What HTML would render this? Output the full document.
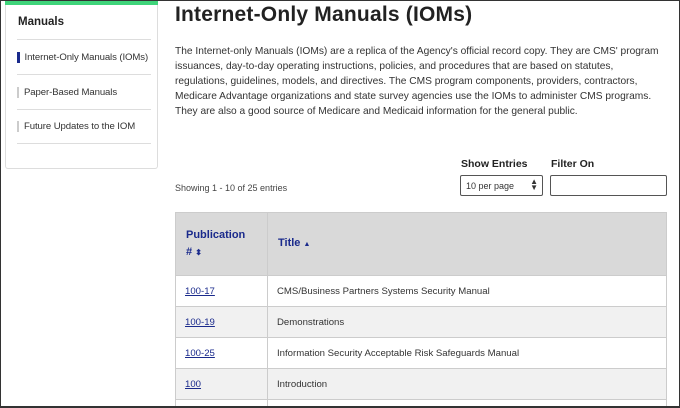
<!DOCTYPE html>
<html><head><style>
*{box-sizing:border-box;margin:0;padding:0}
html,body{width:680px;height:408px;overflow:hidden}
body{background:#fff;font-family:"Liberation Sans",sans-serif;color:#222;position:relative}
.frame{position:absolute;left:0;top:0;width:680px;height:408px;border:1px solid #333;border-bottom-width:2px;pointer-events:none;z-index:9}
.side{position:absolute;left:5px;top:0;width:153px;height:169px;border:1px solid #ddd;border-top:none;border-radius:0 0 3px 3px}
.side .bar{height:5px;background:#3fd47a;margin:0 -1px}
.side h3{font-size:11.5px;font-weight:bold;margin:11px 0 0 12px;color:#222}
.side ul{list-style:none;margin:11px 6px 0 11px}
.side li{border-top:1px solid #ddd;height:35px;display:flex;align-items:center;font-size:9.6px;color:#333;white-space:nowrap;letter-spacing:-.1px}
.side li:last-child{border-bottom:1px solid #ddd}
.side li span{display:inline-block;width:2px;height:11px;background:#ccc;margin-right:5px;flex:none}
.side li.act span{background:#1a2a8c;width:2.5px}
h1{position:absolute;left:175px;top:3px;font-size:21px;font-weight:bold;color:#222;letter-spacing:.2px}
p.d{position:absolute;left:175px;top:44px;font-size:10.2px;line-height:15px;color:#333;white-space:nowrap}
.lbl{position:absolute;top:158px;font-size:10.5px;font-weight:bold;color:#222}
.sel{position:absolute;left:460px;top:175px;width:83px;height:21px;border:1px solid #555;border-radius:2px;font-size:9px;padding:5px 5px;color:#333}
.sel b{position:absolute;right:4px;top:3px;font-size:8px;line-height:6px}
.inp{position:absolute;left:550px;top:175px;width:117px;height:21px;border:1px solid #555;border-radius:2px}
.show{position:absolute;left:175px;top:183px;font-size:9px;color:#444}
table{position:absolute;left:175px;top:212px;width:492px;border-collapse:collapse;font-size:9.6px}
td,th{border:1px solid #ccc;text-align:left;color:#333;font-weight:normal}
th{background:#d9d9d9;height:63px;color:#1a2a8c;font-weight:bold;font-size:11px;padding-left:10px;line-height:17px}
td{height:31px;padding-left:9px}
td:first-child{width:92px}
td a{color:#1a2a8c;text-decoration:underline}
tr.g td{background:#f1f1f1}
</style></head><body>
<div class="frame"></div>
<div class="side"><div class="bar"></div><h3>Manuals</h3>
<ul><li class="act"><span></span>Internet-Only Manuals (IOMs)</li><li><span></span>Paper-Based Manuals</li><li><span></span>Future Updates to the IOM</li></ul></div>
<h1>Internet-Only Manuals (IOMs)</h1>
<p class="d">The Internet-only Manuals (IOMs) are a replica of the Agency's official record copy. They are CMS' program<br>issuances, day-to-day operating instructions, policies, and procedures that are based on statutes,<br>regulations, guidelines, models, and directives. The CMS program components, providers, contractors,<br>Medicare Advantage organizations and state survey agencies use the IOMs to administer CMS programs.<br>They are also a good source of Medicare and Medicaid information for the general public.</p>
<div class="lbl" style="left:461px">Show Entries</div>
<div class="lbl" style="left:551px">Filter On</div>
<div class="sel">10 per page<b>▲<br>▼</b></div>
<div class="inp"></div>
<div class="show">Showing 1 - 10 of 25 entries</div>
<table>
<tr><th style="width:92px">Publication<br># <span style="font-size:8px">⬍</span></th><th>Title <span style="font-size:7px">▲</span></th></tr>
<tr><td><a>100-17</a></td><td>CMS/Business Partners Systems Security Manual</td></tr>
<tr class="g"><td><a>100-19</a></td><td>Demonstrations</td></tr>
<tr><td><a>100-25</a></td><td>Information Security Acceptable Risk Safeguards Manual</td></tr>
<tr class="g"><td><a>100</a></td><td>Introduction</td></tr>
<tr><td style="height:10px"></td><td style="height:10px"></td></tr>
</table>
</body></html>
